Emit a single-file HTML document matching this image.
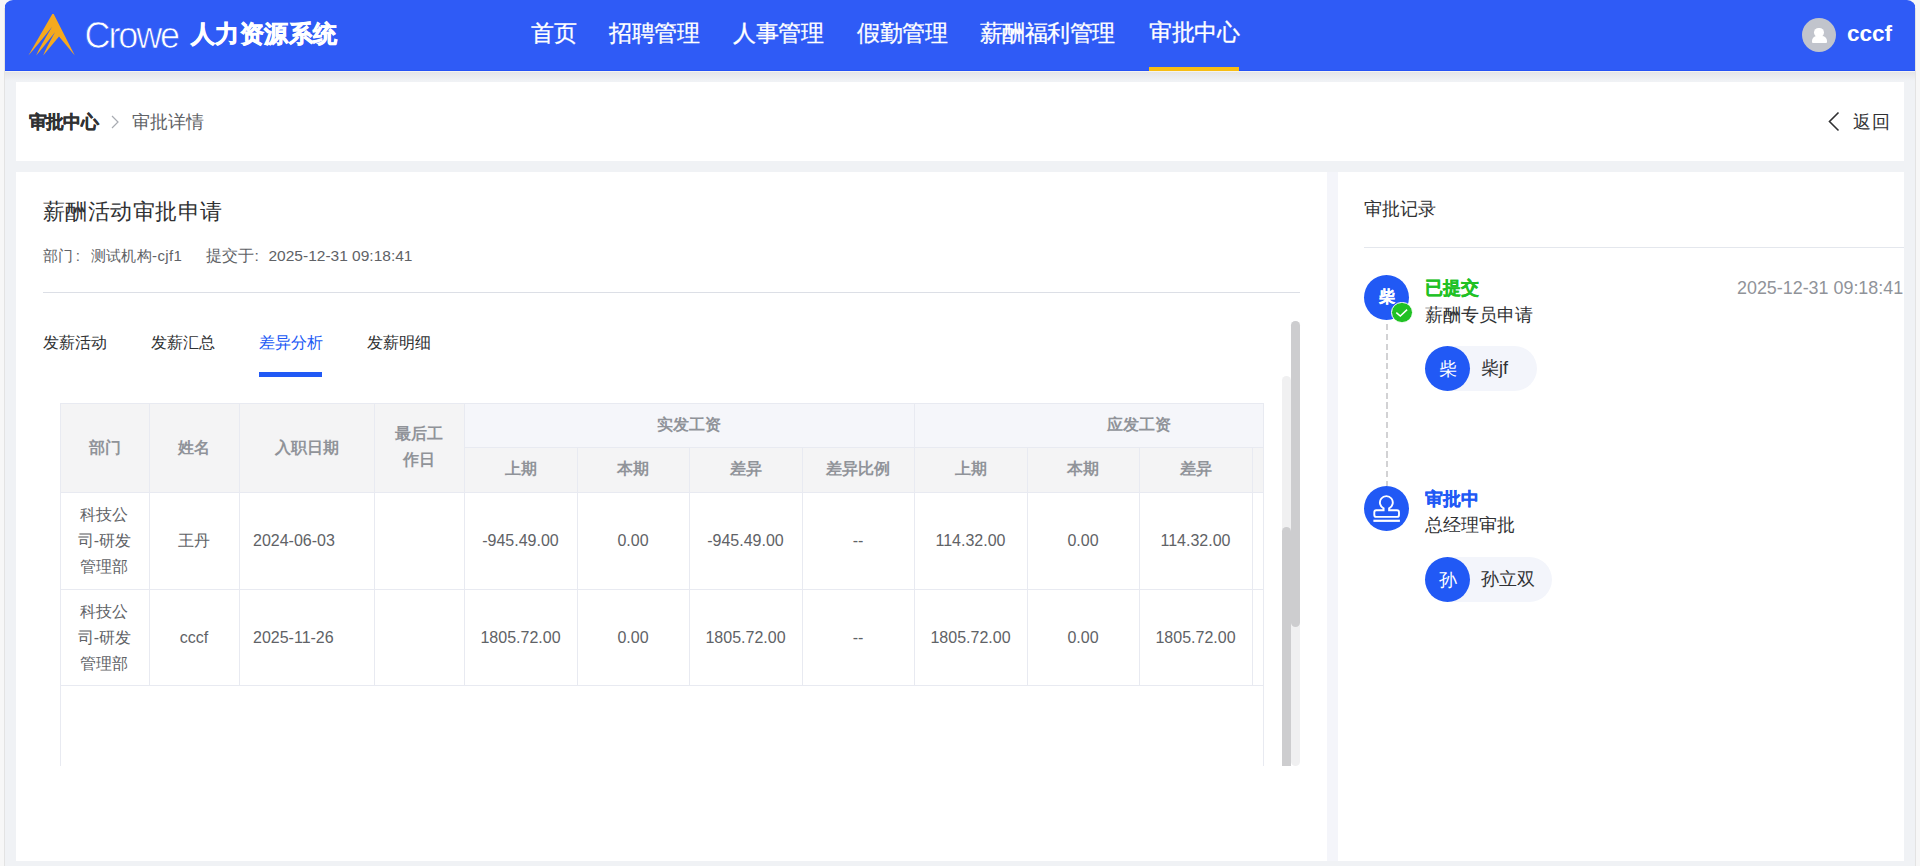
<!DOCTYPE html>
<html><head><meta charset="utf-8">
<style>
*{box-sizing:border-box;margin:0;padding:0}
html,body{width:1920px;height:866px;overflow:hidden;background:#f7f7f7;font-family:"Liberation Sans",sans-serif;}
.abs{position:absolute}
#frame{position:absolute;left:4px;top:0;width:1912px;height:866px;background:#f0f2f5;border-radius:9px 9px 0 0;overflow:hidden}
#bl{position:absolute;left:4px;top:8px;width:1px;height:858px;background:#e3e3e3}
#br{position:absolute;left:1915px;top:8px;width:1px;height:858px;background:#e3e3e3}
#hdr{position:absolute;left:1px;top:0;width:1910px;height:71px;background:#2f5bf6;}
#shadow{position:absolute;left:1px;top:71px;width:1910px;height:11px;background:linear-gradient(#f4f3f0 0 1px,#e4e5e8 1px,#f0f2f5 10px)}
.card{position:absolute;background:#fff}
.nav{position:absolute;top:18.5px;color:#fff;font-size:23px;letter-spacing:-0.3px;-webkit-text-stroke:0.3px #fff;line-height:28px;white-space:nowrap}
.t{position:absolute;white-space:nowrap}
.tc{position:absolute;width:200px;height:80px;display:flex;align-items:center;justify-content:center;text-align:center;white-space:nowrap}
.th{font-size:16px;font-weight:bold;color:#909399}
.td{font-size:16px;color:#606266;line-height:26px}
#tblclip{position:absolute;left:0;top:0;width:1260px;height:866px;overflow:hidden}
.pill{position:absolute;height:45px;border-radius:23px;background:#f3f5fb}
.av{position:absolute;width:45px;height:45px;border-radius:50%;background:#2159f5;color:#fff;font-size:18px;display:flex;align-items:center;justify-content:center}
</style></head>
<body>
<div id="frame">
  <div id="hdr"><div class="abs" style="left:0;top:70px;width:1910px;height:1px;background:#2552f5"></div>
    <svg class="abs" style="left:0;top:0" width="100" height="71" viewBox="0 0 100 71">
      <path fill="#f5a91e" d="M47.30,14.00 L48.70,14.00 L69.80,55.60 L54.00,36.60 L38.20,55.40 Q40.54,49.30 50.00,32.30 Q38.04,47.64 31.20,55.40 Q34.47,47.67 47.10,26.80 Q32.01,45.97 23.40,55.40 Z"/>
    </svg>
    <div class="t" style="left:79.5px;top:16px;font-size:36px;line-height:40px;color:#fff;letter-spacing:-2.1px;-webkit-text-stroke:0.7px #2f5bf6">Crowe</div>
    <div class="t" style="left:186px;top:17.5px;font-size:24px;letter-spacing:0.4px;line-height:32px;color:#fff;font-weight:bold;-webkit-text-stroke:0.7px #fff">人力资源系统</div>
    <div class="nav" style="left:526px">首页</div>
    <div class="nav" style="left:604px">招聘管理</div>
    <div class="nav" style="left:728px">人事管理</div>
    <div class="nav" style="left:852px">假勤管理</div>
    <div class="nav" style="left:975px;letter-spacing:-0.6px">薪酬福利管理</div>
    <div class="nav" style="left:1144px;top:18px">审批中心</div>
    <div class="abs" style="left:1144px;top:67px;width:90px;height:4px;background:#f7bd14"></div>
    <div class="abs" style="left:1797px;top:18px;width:34px;height:34px;border-radius:50%;background:#c1c4cc;overflow:hidden">
      <div class="abs" style="left:12.2px;top:9.5px;width:9.5px;height:9.5px;border-radius:50%;background:#fff"></div>
      <div class="abs" style="left:10px;top:18.4px;width:14.5px;height:6.2px;border-radius:5px 5px 1px 1px;background:#fff"></div>
    </div>
    <div class="t" style="left:1842px;top:20px;font-size:22.5px;line-height:28px;color:#fff;font-weight:bold">cccf</div>
  </div>
  <div id="shadow"></div>
  <!-- breadcrumb card -->
  <div class="card" style="left:12px;top:82px;width:1888px;height:79px"></div>
  <div class="t" style="left:25px;top:111px;font-size:18px;letter-spacing:-0.8px;line-height:22px;color:#303133;font-weight:bold;-webkit-text-stroke:0.3px #303133">审批中心</div>
  <svg class="abs" style="left:104px;top:113px" width="14" height="18" viewBox="0 0 14 18"><polyline points="4,3 10,9 4,15" fill="none" stroke="#a8abb2" stroke-width="1.2"/></svg>
  <div class="t" style="left:128px;top:111px;font-size:18px;letter-spacing:-0.1px;line-height:22px;color:#606266">审批详情</div>
  <svg class="abs" style="left:1820.5px;top:110px" width="16" height="24" viewBox="0 0 16 24"><polyline points="13.5,2.5 4.5,11.5 13.5,20.5" fill="none" stroke="#303133" stroke-width="1.6"/></svg>
  <div class="t" style="left:1849px;top:111px;font-size:18px;letter-spacing:0.5px;line-height:22px;color:#303133">返回</div>
  <!-- left card -->
  <div class="card" style="left:12px;top:172px;width:1311px;height:689px"></div>
  <div class="t" style="left:39px;top:198px;font-size:22px;letter-spacing:0.45px;line-height:28px;color:#303133">薪酬活动审批申请</div>
  <div class="t" style="left:39px;top:246px;font-size:15px;letter-spacing:0.35px;line-height:20px;color:#606266">部门<span style="display:inline-block;width:17px;padding-left:2px">:</span>测试机构-cjf1</div>
  <div class="t" style="left:202px;top:246px;font-size:15.5px;line-height:20px;color:#606266">提交于<span style="display:inline-block;width:14.5px;padding-left:0.5px">:</span>2025-12-31 09:18:41</div>
  <div class="abs" style="left:39px;top:292px;width:1257px;height:1px;background:#dcdfe6"></div>
  <div class="t" style="left:39px;top:333px;font-size:16px;line-height:20px;color:#303133">发薪活动</div>
  <div class="t" style="left:147px;top:333px;font-size:16px;line-height:20px;color:#303133">发薪汇总</div>
  <div class="t" style="left:255px;top:333px;font-size:16px;line-height:20px;color:#2159f5">差异分析</div>
  <div class="t" style="left:363px;top:333px;font-size:16px;line-height:20px;color:#303133">发薪明细</div>
  <div class="abs" style="left:255px;top:372px;width:63px;height:5px;background:#2159f5"></div>
  <div id="tblclip">
<div class="abs" style="left:56px;top:403px;width:1203px;height:89px;background:#f4f4f5"></div>
<div class="abs" style="left:460px;top:403px;width:799px;height:44px;background:#f5f6fa"></div>
<div class="abs" style="left:56px;top:403px;width:1203px;height:1px;background:#e8eaf1"></div>
<div class="abs" style="left:56px;top:492px;width:1203px;height:1px;background:#e8eaf1"></div>
<div class="abs" style="left:56px;top:589px;width:1203px;height:1px;background:#e8eaf1"></div>
<div class="abs" style="left:56px;top:685px;width:1203px;height:1px;background:#e8eaf1"></div>
<div class="abs" style="left:460px;top:447px;width:799px;height:1px;background:#e8eaf1"></div>
<div class="abs" style="left:56px;top:403px;width:1px;height:363px;background:#e8eaf1"></div>
<div class="abs" style="left:145px;top:403px;width:1px;height:282px;background:#e8eaf1"></div>
<div class="abs" style="left:235px;top:403px;width:1px;height:282px;background:#e8eaf1"></div>
<div class="abs" style="left:370px;top:403px;width:1px;height:282px;background:#e8eaf1"></div>
<div class="abs" style="left:460px;top:403px;width:1px;height:282px;background:#e8eaf1"></div>
<div class="abs" style="left:573px;top:447px;width:1px;height:238px;background:#e8eaf1"></div>
<div class="abs" style="left:685px;top:447px;width:1px;height:238px;background:#e8eaf1"></div>
<div class="abs" style="left:798px;top:447px;width:1px;height:238px;background:#e8eaf1"></div>
<div class="abs" style="left:910px;top:403px;width:1px;height:282px;background:#e8eaf1"></div>
<div class="abs" style="left:1023px;top:447px;width:1px;height:238px;background:#e8eaf1"></div>
<div class="abs" style="left:1135px;top:447px;width:1px;height:238px;background:#e8eaf1"></div>
<div class="abs" style="left:1248px;top:447px;width:1px;height:238px;background:#e8eaf1"></div>
<div class="abs" style="left:1259px;top:403px;width:1px;height:363px;background:#e8eaf1"></div>
<div class="tc th" style="left:0.5px;top:408px">部门</div>
<div class="tc th" style="left:90.0px;top:408px">姓名</div>
<div class="tc th" style="left:202.5px;top:408px">入职日期</div>
<div class="tc th" style="left:315.0px;top:407px;line-height:26px">最后工<br>作日</div>
<div class="tc th" style="left:585.0px;top:385px">实发工资</div>
<div class="tc th" style="left:1035.0px;top:385px">应发工资</div>
<div class="tc th" style="left:416.5px;top:429.5px">上期</div>
<div class="tc th" style="left:529.0px;top:429.5px">本期</div>
<div class="tc th" style="left:641.5px;top:429.5px">差异</div>
<div class="tc th" style="left:754.0px;top:429.5px">差异比例</div>
<div class="tc th" style="left:866.5px;top:429.5px">上期</div>
<div class="tc th" style="left:979.0px;top:429.5px">本期</div>
<div class="tc th" style="left:1091.5px;top:429.5px">差异</div>
<div class="tc th" style="left:1204.0px;top:429.5px">差异比例</div>
<div class="tc td" style="left:0.5px;top:500.5px">科技公<br>司-研发<br>管理部</div>
<div class="tc td" style="left:90.0px;top:500.5px">王丹</div>
<div class="tc td" style="left:416.5px;top:500.5px">-945.49.00</div>
<div class="tc td" style="left:529.0px;top:500.5px">0.00</div>
<div class="tc td" style="left:641.5px;top:500.5px">-945.49.00</div>
<div class="tc td" style="left:754.0px;top:500.5px">--</div>
<div class="tc td" style="left:866.5px;top:500.5px">114.32.00</div>
<div class="tc td" style="left:979.0px;top:500.5px">0.00</div>
<div class="tc td" style="left:1091.5px;top:500.5px">114.32.00</div>
<div class="tc td" style="left:1204.0px;top:500.5px">--</div>
<div class="tc td" style="left:0.5px;top:598px">科技公<br>司-研发<br>管理部</div>
<div class="tc td" style="left:90.0px;top:598px">cccf</div>
<div class="tc td" style="left:416.5px;top:598px">1805.72.00</div>
<div class="tc td" style="left:529.0px;top:598px">0.00</div>
<div class="tc td" style="left:641.5px;top:598px">1805.72.00</div>
<div class="tc td" style="left:754.0px;top:598px">--</div>
<div class="tc td" style="left:866.5px;top:598px">1805.72.00</div>
<div class="tc td" style="left:979.0px;top:598px">0.00</div>
<div class="tc td" style="left:1091.5px;top:598px">1805.72.00</div>
<div class="tc td" style="left:1204.0px;top:598px">--</div>
<div class="t td" style="left:249px;top:527.5px">2024-06-03</div>
<div class="t td" style="left:249px;top:625px">2025-11-26</div>
  </div>
  <!-- scrollbars -->
  <div class="abs" style="left:1278px;top:376px;width:9px;height:390px;background:#f0f0f1;border-radius:5px 5px 0 0"></div>
  <div class="abs" style="left:1278px;top:527px;width:9px;height:239px;background:#cdcdcf;border-radius:5px 5px 0 0"></div>
  <div class="abs" style="left:1287px;top:321px;width:9px;height:445px;background:#f0f0f1;border-radius:5px"></div>
  <div class="abs" style="left:1287px;top:321px;width:9px;height:306px;background:#cdcdcf;border-radius:5px"></div>
  <div class="abs" style="left:1323px;top:172px;width:11px;height:689px;background:#f4f5fa"></div>
  <!-- right card -->
  <div class="card" style="left:1334px;top:172px;width:566px;height:689px"></div>
  <div class="t" style="left:1360px;top:198px;font-size:18px;line-height:22px;color:#303133">审批记录</div>
  <div class="abs" style="left:1360px;top:247px;width:540px;height:1px;background:#e4e7ed"></div>
  <div class="abs" style="left:1382px;top:323.6px;width:2px;height:162.4px;background:repeating-linear-gradient(#d2d2d4 0 6.2px,transparent 6.2px 9.8px)"></div>
  <div class="av" style="left:1360px;top:275px;font-weight:bold;font-size:16px;-webkit-text-stroke:0.3px #fff">柴</div>
  <div class="abs" style="left:1387px;top:301.5px;width:21.5px;height:21.5px;border-radius:50%;background:#20c124;border:1.8px solid #fff">
    <svg class="abs" style="left:0;top:0" width="18" height="18" viewBox="0 0 18 18"><polyline points="4.3,9.6 8.3,13.1 15.1,6.6" fill="none" stroke="#fff" stroke-width="1.5"/></svg>
  </div>
  <div class="t" style="left:1421px;top:277px;font-size:18px;line-height:22px;color:#20c124;font-weight:bold;-webkit-text-stroke:0.3px #20c124">已提交</div>
  <div class="t" style="left:1733px;top:277px;font-size:17.9px;line-height:22px;color:#909399">2025-12-31 09:18:41</div>
  <div class="t" style="left:1421px;top:304px;font-size:18px;line-height:22px;color:#303133">薪酬专员申请</div>
  <div class="pill" style="left:1421px;top:346px;width:112px"></div>
  <div class="av" style="left:1421px;top:346px">柴</div>
  <div class="t" style="left:1477px;top:357px;font-size:18px;line-height:22px;color:#303133">柴jf</div>

  <div class="av" style="left:1360px;top:486px">
    <svg width="45" height="45" viewBox="0 0 45 45"><path fill="none" stroke="#fff" stroke-width="1.9" d="M19.6,22.3 A6.42,6.42 0 1 1 25.1,22.3 L25.1,24.3 L33,24.3 Q35,24.3 35,26.3 L35,28.9 Q35,30.9 33,30.9 L12.3,30.9 Q10.3,30.9 10.3,28.9 L10.3,26.3 Q10.3,24.3 12.3,24.3 L19.6,24.3 Z"/><rect x="9.4" y="33.7" width="26.5" height="2.2" fill="#fff"/></svg>
  </div>
  <div class="t" style="left:1421px;top:488px;font-size:18px;line-height:22px;color:#2159f5;font-weight:bold;-webkit-text-stroke:0.3px #2159f5">审批中</div>
  <div class="t" style="left:1421px;top:514px;font-size:18px;line-height:22px;color:#303133">总经理审批</div>
  <div class="pill" style="left:1421px;top:557px;width:127px"></div>
  <div class="av" style="left:1421px;top:557px">孙</div>
  <div class="t" style="left:1477px;top:568px;font-size:18px;line-height:22px;color:#303133">孙立双</div>
</div>
<div id="bl"></div><div id="br"></div>
</body></html>
